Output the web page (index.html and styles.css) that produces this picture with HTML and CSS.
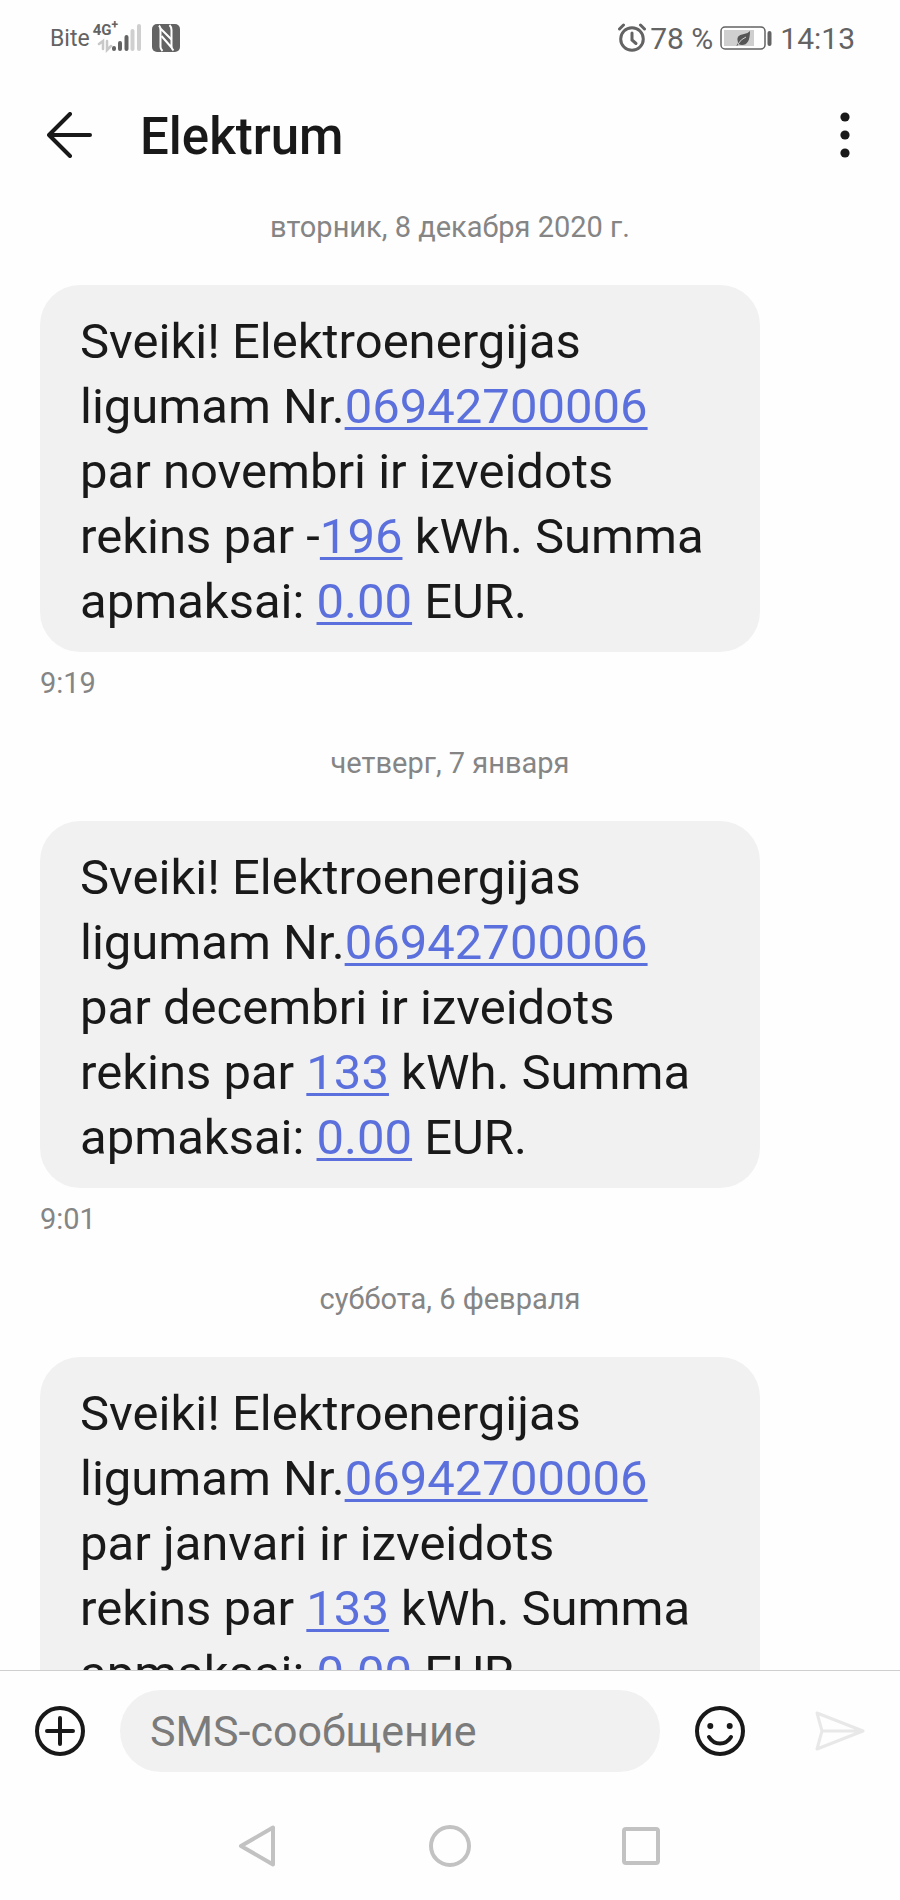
FILE: index.html
```html
<!DOCTYPE html>
<html lang="ru">
<head>
    <meta charset="UTF-8">
    <meta name="viewport" content="width=device-width, initial-scale=1.0">
    <title>Elektrum</title>
    <link rel="stylesheet" href="styles.css">
</head>
<body>
    <div class="status-bar">
        <div class="status-left">
            <span class="carrier">Bite</span>
            <div class="network">
                <span class="network-type">4G<sup>+</sup></span>
                <svg class="signal" width="48" height="30" viewBox="0 0 48 30" fill="none" stroke-linecap="round">
                    <path d="M6 21l4-3v8M14 18v9l4-4" stroke="#c8c8c8" stroke-width="2.500"/>
                    <path d="M21 25v1M27 20v6M33.500 14v12" stroke="#636363" stroke-width="4"/>
                    <path d="M39.500 8v18M46 3v23" stroke="#cfcfcf" stroke-width="4"/>
                </svg>
            </div>
            <svg class="nfc" width="28" height="28" viewBox="0 0 28 28">
                <rect width="28" height="28" rx="5" fill="#636363"/>
                <path d="M7 1.500Q8.500 3 8.500 6V23Q8.500 25 10.500 27M8.500 4.500L19.500 15.500" fill="none" stroke="#fff" stroke-width="2"/>
                <path d="M17.500 1Q19.500 3 19.500 6V22Q19.500 25 21.500 26.500M19.500 23.500L9.500 12" fill="none" stroke="#fff" stroke-width="2"/>
            </svg>
        </div>
        <div class="status-right">
            <svg width="28" height="30" viewBox="0 0 28 30" fill="none" stroke="#636363" stroke-linecap="round">
                <circle cx="14" cy="16" r="11.300" stroke-width="3"/>
                <path d="M14 10v7l4 3.500" stroke-width="3"/>
                <path d="M1.500 6l4-4M26.500 6l-4-4" stroke-width="3"/>
            </svg>
            <span class="percent">78 %</span>
            <svg class="battery" width="52" height="26" viewBox="0 0 52 26">
                <rect x="1" y="2" width="44" height="22" rx="4" fill="#fff" stroke="#636363" stroke-width="1.500"/>
                <rect x="4" y="5" width="30" height="16" fill="#cfcfcf"/>
                <path d="M30 6Q30 20 22 20Q20 20 18.500 19L17 21L16.500 20.500L18 18Q15 10 24 9Q28 8.500 30 6z" fill="#555"/>
                <path d="M18 19Q21 14 26 12" fill="none" stroke="#cfcfcf" stroke-width="1"/>
                <path d="M49.500 8v11" stroke="#636363" stroke-width="4" stroke-linecap="round"/>
            </svg>
            <span>14:13</span>
        </div>
    </div>

    <header class="header">
        <button type="button" aria-label="Назад">
            <svg width="46" height="46" viewBox="0 0 46 46" fill="none" stroke="#191919" stroke-width="4" stroke-linecap="round" stroke-linejoin="round">
                <path d="M43 23H2M23 2L2 23l21 21"/>
            </svg>
        </button>
        <h1>Elektrum</h1>
        <button type="button" class="menu" aria-label="Меню">
            <svg width="10" height="46" viewBox="0 0 10 46" fill="#191919">
                <circle cx="5" cy="5" r="4.600"/>
                <circle cx="5" cy="23" r="4.600"/>
                <circle cx="5" cy="41" r="4.600"/>
            </svg>
        </button>
    </header>

    <main class="messages">
        <section class="day">
            <h2>вторник, 8 декабря 2020 г.</h2>
            <p class="bubble">
                Sveiki! Elektroenergijas<br>
                ligumam Nr.<a href="tel:06942700006">06942700006</a><br>
                par novembri ir izveidots<br>
                rekins par -<a href="tel:196">196</a> kWh. Summa<br>
                apmaksai: <a href="tel:000">0.00</a> EUR.
            </p>
            <time>9:19</time>
        </section>
        <section class="day">
            <h2>четверг, 7 января</h2>
            <p class="bubble">
                Sveiki! Elektroenergijas<br>
                ligumam Nr.<a href="tel:06942700006">06942700006</a><br>
                par decembri ir izveidots<br>
                rekins par <a href="tel:133">133</a> kWh. Summa<br>
                apmaksai: <a href="tel:000">0.00</a> EUR.
            </p>
            <time>9:01</time>
        </section>
        <section class="day">
            <h2>суббота, 6 февраля</h2>
            <p class="bubble">
                Sveiki! Elektroenergijas<br>
                ligumam Nr.<a href="tel:06942700006">06942700006</a><br>
                par janvari ir izveidots<br>
                rekins par <a href="tel:133">133</a> kWh. Summa<br>
                apmaksai: <a href="tel:000">0.00</a> EUR.
            </p>
        </section>
    </main>

    <form class="composer">
        <button type="button" aria-label="Добавить">
            <svg width="50" height="50" viewBox="0 0 50 50" fill="none" stroke="#191919" stroke-width="4" stroke-linecap="round">
                <circle cx="25" cy="25" r="23"/>
                <path d="M25 12v26M12 25h26"/>
            </svg>
        </button>
        <input type="text" placeholder="SMS-сообщение" aria-label="SMS-сообщение">
        <button type="button" aria-label="Смайлы">
            <svg width="50" height="50" viewBox="0 0 50 50" fill="none" stroke="#191919" stroke-width="4" stroke-linecap="round">
                <circle cx="25" cy="25" r="23"/>
                <path d="M14 31Q18 37.500 25 37.500T36 31"/>
                <g fill="#191919" stroke="none">
                    <circle cx="15.300" cy="20" r="3"/>
                    <circle cx="34.700" cy="20" r="3"/>
                </g>
            </svg>
        </button>
        <button type="submit" class="send" aria-label="Отправить">
            <svg width="50" height="50" viewBox="0 0 50 50" fill="none" stroke="#e8e8e8" stroke-width="3" stroke-linecap="round" stroke-linejoin="round">
                <path d="M2 7L48 25L2 43L7 25zM7 25H48"/>
            </svg>
        </button>
    </form>

    <nav class="nav-bar">
        <button type="button" aria-label="Назад">
            <svg width="42" height="42" viewBox="0 0 42 42" fill="none" stroke="#c2c2c2" stroke-width="4" stroke-linejoin="round">
                <path d="M4 21L36 2.500v37z"/>
            </svg>
        </button>
        <button type="button" aria-label="Домой">
            <svg width="42" height="42" viewBox="0 0 42 42" fill="none" stroke="#c2c2c2" stroke-width="4">
                <circle cx="21" cy="21" r="19"/>
            </svg>
        </button>
        <button type="button" aria-label="Недавние">
            <svg width="42" height="42" viewBox="0 0 42 42" fill="none" stroke="#c2c2c2" stroke-width="4">
                <rect x="3" y="4" width="34" height="34" rx="2"/>
            </svg>
        </button>
    </nav>
</body>
</html>
```
FILE: styles.css
```css
:root {
    --text-color: #191919;
    --muted-color: #858585;
    --status-color: #636363;
    --bubble-color: #f1f1f1;
    --link-color: #5b70dc;
    --border-color: #cfcfcf;
}

* {
    box-sizing: border-box;
}

body {
    display: flex;
    flex-direction: column;
    height: 100vh;
    margin: 0;
    background-color: #fefefe;
    color: var(--text-color);
    font-family: Roboto, sans-serif;
}

svg {
    display: block;
}

button {
    flex: none;
    padding: 0;
    border: none;
    background: none;
    cursor: pointer;
}

.status-bar {
    display: flex;
    flex: none;
    justify-content: space-between;
    align-items: center;
    height: 76px;
    padding: 0 45px 0 50px;
    color: var(--status-color);
    font-size: 30px;
}

.status-left,
.status-right {
    display: flex;
    align-items: center;
}

.carrier {
    font-size: 23px;
}

.network {
    position: relative;
    margin-left: 3px;
}

.network-type {
    position: absolute;
    left: 0;
    top: 0;
    font-size: 15px;
    font-weight: 700;
    line-height: 15px;
}

.network-type sup {
    font-size: 12px;
    line-height: 0;
}

.nfc {
    margin-left: 11px;
}

.percent {
    margin-left: 4px;
}

.battery {
    margin: 0 8px 0 7px;
}

.header {
    display: flex;
    flex: none;
    align-items: center;
    height: 118px;
    padding: 0 50px 0 47px;
}

.header h1 {
    margin: 0 0 0 47px;
    padding-top: 3px;
    font-size: 51px;
    font-weight: 500;
}

.menu {
    margin-left: auto;
}

.messages {
    flex: 1;
    min-height: 0;
    overflow: hidden;
    padding: 0 40px;
}

.day {
    margin-bottom: 27px;
}

.day h2 {
    margin: 0;
    padding: 13px 0 38px;
    color: var(--muted-color);
    font-size: 29px;
    font-weight: 400;
    line-height: 40px;
    text-align: center;
}

.bubble {
    max-width: 720px;
    margin: 0;
    padding: 24px 40px 18px;
    border-radius: 40px;
    background-color: var(--bubble-color);
    font-size: 49px;
    line-height: 65px;
}

.bubble a {
    color: var(--link-color);
    text-decoration-thickness: 3px;
    text-underline-offset: 4px;
    text-decoration-skip-ink: none;
}

.day time {
    display: block;
    padding-top: 11px;
    color: var(--muted-color);
    font-size: 29px;
    line-height: 40px;
}

.composer {
    display: flex;
    flex: none;
    align-items: center;
    gap: 35px;
    padding: 19px 35px;
    border-top: 1px solid var(--border-color);
}

.composer input {
    flex: 1;
    min-width: 0;
    height: 82px;
    padding: 0 30px;
    border: none;
    border-radius: 41px;
    outline: none;
    background-color: var(--bubble-color);
    color: var(--text-color);
    font-family: inherit;
    font-size: 43px;
}

.composer input::placeholder {
    color: #7b7b7b;
}

.send {
    margin-left: 35px;
}

.nav-bar {
    display: flex;
    flex: none;
    justify-content: center;
    align-items: center;
    gap: 150px;
    height: 109px;
}
```
